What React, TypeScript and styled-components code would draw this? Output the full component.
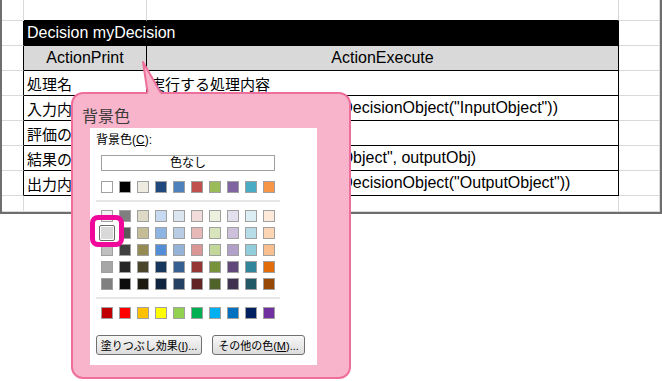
import * as React from 'react'
import styled, { createGlobalStyle, css } from 'styled-components'

//=================================/
const GRID = '#d9d9d9';
const INK = '#000';

const theme = ['#FFFFFF', '#000000', '#EEECE1', '#1F497D', '#4F81BD', '#C0504D', '#9BBB59', '#8064A2', '#4BACC6', '#F79646'];

const tints = [
    ['#F2F2F2', '#7F7F7F', '#DDD9C4', '#C5D9F1', '#DCE6F1', '#F2DCDB', '#EBF1DE', '#E4DFEC', '#DAEEF3', '#FDE9D9'],
    ['#D9D9D9', '#595959', '#C4BD97', '#8DB4E2', '#B8CCE4', '#E6B8B7', '#D8E4BC', '#CCC0DA', '#B7DEE8', '#FCD5B4'],
    ['#BFBFBF', '#404040', '#948A54', '#538DD5', '#95B3D7', '#DA9694', '#C4D79B', '#B1A0C7', '#92CDDC', '#FABF8F'],
    ['#A6A6A6', '#262626', '#4A452A', '#16365C', '#366092', '#963634', '#76933C', '#60497A', '#31869B', '#E26B0A'],
    ['#808080', '#0D0D0D', '#1D1B10', '#0F243E', '#244062', '#632523', '#4F6228', '#403151', '#215967', '#974706'],
];

const standard = ['#C00000', '#FF0000', '#FFC000', '#FFFF00', '#92D050', '#00B050', '#00B0F0', '#0070C0', '#002060', '#7030A0'];

const bodyRows = [
    ['処理名', '実行する処理内容'],
    ['入力内容', 'DisplayDecisionObject(GetDecisionObject("InputObject"))'],
    ['評価の実行', 'Evaluate()'],
    ['結果の格納', 'SetDecisionObject("OutputObject", outputObj)'],
    ['出力内容', 'DisplayDecisionObject(GetDecisionObject("OutputObject"))'],
];
//=================================/

const GlobalStyle = createGlobalStyle`
    html, body {
        margin: 0;
        padding: 0;
        background: #fff;
    }
    body {
        font-family: "Liberation Sans", "Noto Sans CJK JP", sans-serif;
    }
`;

//=================================/
const Page = styled.div`
    position: relative;
    width: 662px;
    height: 381px;
    overflow: hidden;
    background: #fff;
`;

const Sheet = styled.div`
    box-sizing: border-box;
    width: 662px;
    height: 214px;
    border: 2px solid #6e6e6e;
    border-top: none;
    display: grid;
    grid-template-columns: 22px 123px 472px 1fr;
    grid-template-rows: 21px repeat(7, 25px) 1fr;
`;

interface ICellProps {
    $right?: string;
    $bottom?: string;
    $bg?: string;
    $fg?: string;
    $center?: boolean;
    $ja?: boolean;
    $span?: number;
}

const Cell = styled.div<ICellProps>`
    box-sizing: border-box;
    display: flex;
    align-items: center;
    justify-content: ${p => p.$center ? 'center' : 'flex-start'};
    padding: 0 3px;
    border-right: 1px solid ${p => p.$right || GRID};
    border-bottom: 1px solid ${p => p.$bottom || GRID};
    background: ${p => p.$bg || 'transparent'};
    color: ${p => p.$fg || INK};
    font-size: ${p => p.$ja ? '15px' : '16px'};
    white-space: nowrap;
    overflow: hidden;
    grid-column: span ${p => p.$span || 1};
`;

const Callout = styled.div`
    position: absolute;
    left: 71px;
    top: 92px;
    box-sizing: border-box;
    width: 280px;
    height: 287px;
    border: 2px solid #ee6f9c;
    border-radius: 12px;
    background: #f8b4cb;
    padding: 11px 0 0 9px;
    display: flex;
    flex-direction: column;
`;

const Tail = styled.svg`
    position: absolute;
    left: 138px;
    top: 58px;
    overflow: visible;
`;

const Title = styled.div`
    font-family: "Noto Sans CJK JP", sans-serif;
    font-size: 16px;
    line-height: 20px;
    color: #3a3a3a;
`;

const Panel = styled.div`
    position: relative;
    box-sizing: border-box;
    margin: 3px 0 0 8px;
    width: 227px;
    height: 237px;
    background: #fff;
    padding: 5px 0 0 6px;
    display: flex;
    flex-direction: column;
    align-items: flex-start;
    font-size: 12px;
    color: #000;
`;

const Label = styled.div`
    line-height: 14px;
`;

const U = styled.span`
    text-decoration: underline;
`;

const NoColor = styled.div`
    box-sizing: border-box;
    margin: 8px 0 0 5px;
    width: 174px;
    height: 16px;
    border: 1px solid #a0a0a0;
    display: flex;
    align-items: center;
    justify-content: center;
    line-height: 14px;
`;

const Swatches = styled.div<{ $top: number }>`
    margin: ${p => p.$top}px 0 0 5px;
    display: grid;
    grid-template-columns: repeat(10, 12px);
    column-gap: 6px;
    row-gap: 5px;
`;

const Swatch = styled.div<{ $c: string; $sel?: boolean }>`
    box-sizing: border-box;
    width: 12px;
    height: 12px;
    border: 1px solid #a0a0a0;
    background: ${p => p.$c};
    ${p => p.$sel && css`
        width: 16px;
        height: 16px;
        margin: -2px;
        border: 1px solid #6a6a6a;
        border-radius: 2px;
        box-shadow: inset 0 0 0 1px #fff;
    `}
`;

const Separator = styled.div`
    margin-top: 7px;
    width: 184px;
    height: 2px;
    background: #e6e6e6;
`;

const Buttons = styled.div`
    margin-top: 16px;
    display: flex;
    gap: 10px;
`;

const Button = styled.button<{ $w: number }>`
    box-sizing: border-box;
    width: ${p => p.$w}px;
    height: 20px;
    padding: 0;
    border: 1px solid #707070;
    border-radius: 3px;
    background: linear-gradient(#f7f7f7, #dcdcdc);
    font-family: inherit;
    font-size: 11px;
    color: #000;
    white-space: nowrap;
`;

const Highlight = styled.div`
    position: absolute;
    left: 0;
    top: 87px;
    box-sizing: border-box;
    width: 34px;
    height: 32px;
    border: 5px solid #f0089b;
    border-radius: 8px;
`;
//=================================/

const Spreadsheet: React.FC = () => (
    <Sheet>
        <Cell />
        <Cell $bottom={INK} />
        <Cell $bottom={INK} />
        <Cell />

        <Cell $right={INK} />
        <Cell $span={2} $bg={INK} $fg="#fff" $right={INK} $bottom={INK}>Decision myDecision</Cell>
        <Cell />

        <Cell $right={INK} />
        <Cell $bg="#d9d9d9" $right={INK} $bottom={INK} $center>ActionPrint</Cell>
        <Cell $bg="#d9d9d9" $right={INK} $bottom={INK} $center>ActionExecute</Cell>
        <Cell />

        {bodyRows.map(([name, action], i) => (
            <React.Fragment key={i}>
                <Cell $right={INK} />
                <Cell $right={INK} $bottom={INK} $ja>{name}</Cell>
                <Cell $right={INK} $bottom={INK} $ja={i === 0}>{action}</Cell>
                <Cell />
            </React.Fragment>
        ))}

        <Cell />
        <Cell />
        <Cell />
        <Cell />
    </Sheet>
);

const ColorPicker: React.FC = () => (
    <Panel>
        <Label>背景色(<U>C</U>):</Label>
        <NoColor>色なし</NoColor>
        <Swatches $top={10}>
            {theme.map(c => <Swatch key={c} $c={c} />)}
        </Swatches>
        <Separator />
        <Swatches $top={8}>
            {tints.map((row, r) => row.map((c, i) => (
                <Swatch key={`${r}-${i}`} $c={c} $sel={r === 1 && i === 0} />
            )))}
        </Swatches>
        <Separator />
        <Swatches $top={8}>
            {standard.map(c => <Swatch key={c} $c={c} />)}
        </Swatches>
        <Buttons>
            <Button $w={106}>塗りつぶし効果(<U>I</U>)...</Button>
            <Button $w={93}>その他の色(<U>M</U>)...</Button>
        </Buttons>
        <Highlight />
    </Panel>
);

//=====================================================================================//
export default function App() {
    return (
        <Page>
            <GlobalStyle />
            <Spreadsheet />
            <Callout>
                <Title>背景色</Title>
                <ColorPicker />
            </Callout>
            <Tail width="30" height="40" viewBox="0 0 30 40">
                <polygon points="5,4 10,38 24,38" fill="#f8b4cb" />
                <polyline
                    points="9.6,34.5 5,4 22.6,34.5"
                    fill="none"
                    stroke="#ee6f9c"
                    strokeWidth="2"
                    strokeLinejoin="round"
                />
            </Tail>
        </Page>
    );
}
//=====================================================================================//
